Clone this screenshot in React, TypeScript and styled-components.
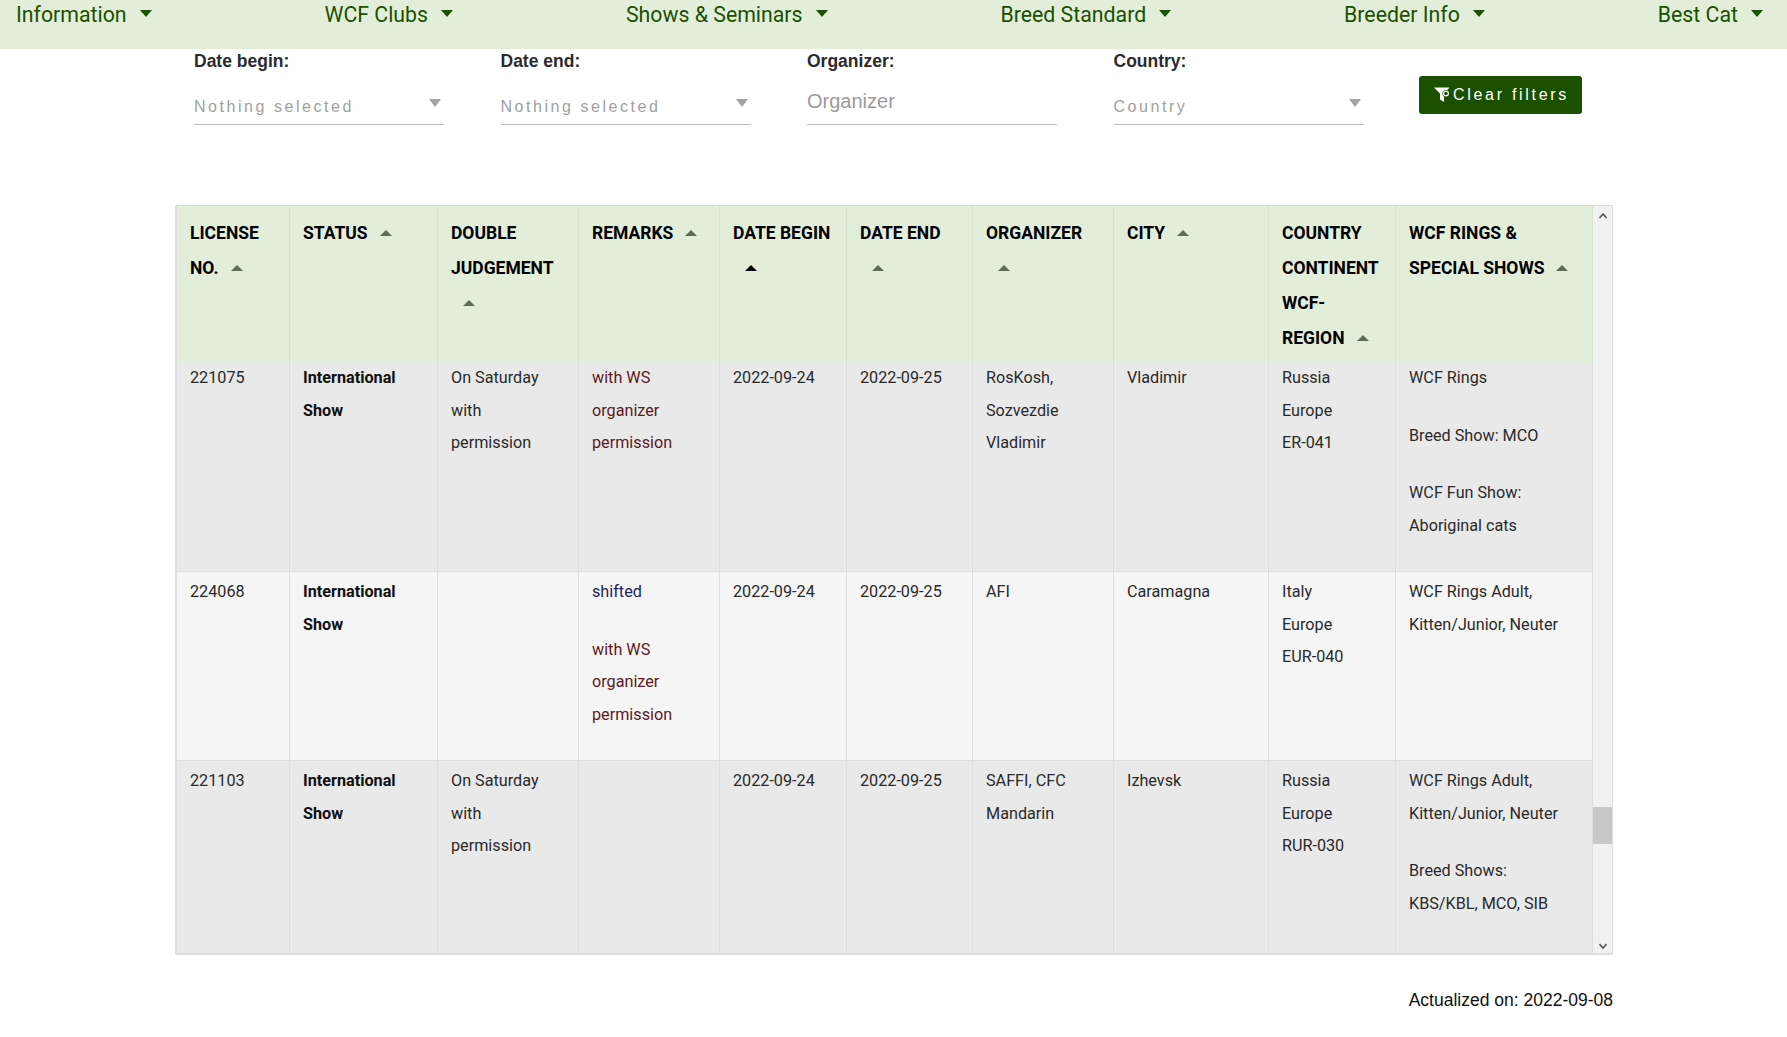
import React from 'react'
import styled, { createGlobalStyle } from 'styled-components'

const GlobalStyle = createGlobalStyle`
  html, body {
    margin: 0;
    padding: 0;
    background: #fff;
    overflow: hidden;
  }
  * { box-sizing: border-box; }
`

const COLUMNS = '113px 148px 141px 141px 127px 126px 141px 155px 127px 197px'

const navItems = ['Information', 'WCF Clubs', 'Shows & Seminars', 'Breed Standard', 'Breeder Info', 'Best Cat']

const headers = [
  { lines: ['LICENSE', 'NO.'] },
  { lines: ['STATUS'] },
  { lines: ['DOUBLE', 'JUDGEMENT', ''] },
  { lines: ['REMARKS'] },
  { lines: ['DATE BEGIN', ''], active: true },
  { lines: ['DATE END', ''] },
  { lines: ['ORGANIZER', ''] },
  { lines: ['CITY'] },
  { lines: ['COUNTRY', 'CONTINENT', 'WCF-', 'REGION'] },
  { lines: ['WCF RINGS &', 'SPECIAL SHOWS'] },
]

type Row = {
  height: number
  even?: boolean
  first?: boolean
  license: string
  judgement: string[]
  remarks: { text: string; tone: 'red' | 'blue' }[][]
  organizer: string[]
  city: string
  region: string[]
  rings: string[][]
}

const withWs = [
  { text: 'with WS', tone: 'red' as const },
  { text: 'organizer', tone: 'red' as const },
  { text: 'permission', tone: 'red' as const },
]

const rows: Row[] = [
  {
    height: 214,
    first: true,
    license: '221075',
    judgement: ['On Saturday', 'with', 'permission'],
    remarks: [withWs],
    organizer: ['RosKosh,', 'Sozvezdie', 'Vladimir'],
    city: 'Vladimir',
    region: ['Russia', 'Europe', 'ER-041'],
    rings: [['WCF Rings'], ['Breed Show: MCO'], ['WCF Fun Show:', 'Aboriginal cats']],
  },
  {
    height: 189,
    even: true,
    license: '224068',
    judgement: [],
    remarks: [[{ text: 'shifted', tone: 'blue' }], withWs],
    organizer: ['AFI'],
    city: 'Caramagna',
    region: ['Italy', 'Europe', 'EUR-040'],
    rings: [['WCF Rings Adult,', 'Kitten/Junior, Neuter']],
  },
  {
    height: 195,
    license: '221103',
    judgement: ['On Saturday', 'with', 'permission'],
    remarks: [],
    organizer: ['SAFFI, CFC', 'Mandarin'],
    city: 'Izhevsk',
    region: ['Russia', 'Europe', 'RUR-030'],
    rings: [['WCF Rings Adult,', 'Kitten/Junior, Neuter'], ['Breed Shows:', 'KBS/KBL, MCO, SIB']],
  },
]

const App = () => {
  return (
    <>
      <GlobalStyle />
      <NavBar>
        {navItems.map((item) => (
          <NavItem key={item}>
            {item}
            <NavCaret />
          </NavItem>
        ))}
      </NavBar>

      <Filters>
        <Field>
          <FieldLabel>Date begin:</FieldLabel>
          <SelectBox>
            Nothing selected
            <SelectCaret />
          </SelectBox>
        </Field>
        <Field>
          <FieldLabel>Date end:</FieldLabel>
          <SelectBox>
            Nothing selected
            <SelectCaret />
          </SelectBox>
        </Field>
        <Field>
          <FieldLabel>Organizer:</FieldLabel>
          <TextInput placeholder="Organizer" />
        </Field>
        <Field>
          <FieldLabel>Country:</FieldLabel>
          <SelectBox>
            Country
            <SelectCaret />
          </SelectBox>
        </Field>
        <ClearButton>
          <svg width="17" height="16" viewBox="0 0 17 16">
            <path d="M0 0.5h15.5L10 6.5v8.5L6 12.5V6.5z" fill="#fff" />
            <circle cx="12" cy="6.5" r="3.6" fill="#1b5000" />
            <circle cx="12" cy="6.5" r="2.4" fill="none" stroke="#fff" strokeWidth="1.2" />
          </svg>
          Clear filters
        </ClearButton>
      </Filters>

      <TableFrame>
        <TableArea>
          <HeaderRow>
            {headers.map((h, i) => (
              <HeaderCell key={i}>
                {h.lines.map((line, j) => (
                  <HeaderLine key={j}>
                    {line}
                    {j === h.lines.length - 1 && <SortCaret $active={h.active} />}
                  </HeaderLine>
                ))}
              </HeaderCell>
            ))}
          </HeaderRow>
          <BodyClip>
            {rows.map((row) => (
              <BodyRow key={row.license} $even={row.even} $first={row.first} $height={row.height}>
                <Cell>{row.license}</Cell>
                <Cell>
                  <StatusText>International</StatusText>
                  <StatusText>Show</StatusText>
                </Cell>
                <Cell>
                  {row.judgement.map((l) => (
                    <div key={l}>{l}</div>
                  ))}
                </Cell>
                <Cell>
                  {row.remarks.map((group, i) => (
                    <Block key={i}>
                      {group.map((l) => (
                        <RemarkLine key={l.text} $tone={l.tone}>
                          {l.text}
                        </RemarkLine>
                      ))}
                    </Block>
                  ))}
                </Cell>
                <Cell>2022-09-24</Cell>
                <Cell>2022-09-25</Cell>
                <Cell>
                  {row.organizer.map((l) => (
                    <div key={l}>{l}</div>
                  ))}
                </Cell>
                <Cell>{row.city}</Cell>
                <Cell>
                  {row.region.map((l) => (
                    <div key={l}>{l}</div>
                  ))}
                </Cell>
                <Cell>
                  {row.rings.map((group, i) => (
                    <Block key={i}>
                      {group.map((l) => (
                        <div key={l}>{l}</div>
                      ))}
                    </Block>
                  ))}
                </Cell>
              </BodyRow>
            ))}
          </BodyClip>
        </TableArea>
        <ScrollBar>
          <ScrollArrow viewBox="0 0 8 6">
            <path d="M0.5 5L4 1l3.5 4" fill="none" stroke="#555" strokeWidth="1.6" />
          </ScrollArrow>
          <ScrollThumb />
          <ScrollArrow viewBox="0 0 8 6">
            <path d="M0.5 1L4 5l3.5-4" fill="none" stroke="#555" strokeWidth="1.6" />
          </ScrollArrow>
        </ScrollBar>
      </TableFrame>

      <Actualized>Actualized on: 2022-09-08</Actualized>
    </>
  )
}

const NavBar = styled.nav`
  height: 49px;
  padding: 0 24px 20px 16px;
  display: flex;
  justify-content: space-between;
  align-items: center;
  background-color: #e3eeda;
`
const NavItem = styled.div`
  display: flex;
  align-items: center;
  font-family: Roboto, sans-serif;
  font-size: 21.3px;
  color: #1b5000;
  white-space: nowrap;
`
const NavCaret = styled.span`
  width: 0;
  height: 0;
  margin-left: 13px;
  margin-bottom: 3px;
  border-left: 6.5px solid transparent;
  border-right: 6.5px solid transparent;
  border-top: 7px solid #1b5000;
`
const Filters = styled.section`
  height: 156px;
  padding-left: 194px;
  display: flex;
  align-items: flex-start;
  gap: 56.5px;
`
const Field = styled.div`
  width: 250px;
`
const FieldLabel = styled.div`
  height: 36px;
  line-height: 24px;
  font-family: "Liberation Sans", Arial, sans-serif;
  font-size: 17.5px;
  font-weight: 700;
  color: #2b2b2b;
`
const SelectBox = styled.div`
  height: 40px;
  padding-top: 12px;
  display: flex;
  justify-content: space-between;
  font-family: "Liberation Sans", Arial, sans-serif;
  font-size: 16px;
  line-height: 19px;
  letter-spacing: 2.55px;
  color: #a0a0a0;
  border-bottom: 1px solid #bdbdbd;

  span {
    margin: 2px 3px 0 0;
  }
`
const SelectCaret = styled.span`
  width: 0;
  height: 0;
  border-left: 6.5px solid transparent;
  border-right: 6.5px solid transparent;
  border-top: 8px solid #a3a3a3;
`
const TextInput = styled.input`
  display: block;
  width: 100%;
  height: 40px;
  padding: 0 0 6px;
  border: 0;
  border-bottom: 1px solid #bdbdbd;
  outline: none;
  background: transparent;
  font-family: "Liberation Sans", Arial, sans-serif;
  font-size: 20px;
  &::placeholder {
    color: #9b9b9b;
    opacity: 1;
  }
`
const ClearButton = styled.button`
  width: 163px;
  height: 38px;
  margin: 27px 0 0 -1px;
  padding: 0 0 0 15px;
  display: flex;
  align-items: center;
  border: 0;
  border-radius: 3px;
  background-color: #1b5000;
  color: #fff;
  font-family: "Liberation Sans", Arial, sans-serif;
  font-size: 16px;
  letter-spacing: 2.7px;
  white-space: nowrap;

  svg {
    flex: none;
    margin-right: 2px;
  }
`
const TableFrame = styled.div`
  width: 1438px;
  height: 750px;
  margin-left: 175px;
  display: flex;
  border: 1px solid #dddddd;
  border-left-width: 2px;
  border-bottom-width: 2px;
`
const TableArea = styled.div`
  width: 1416px;
  display: flex;
  flex-direction: column;
`
const HeaderRow = styled.div`
  display: grid;
  grid-template-columns: ${COLUMNS};
  height: 157px;
  background-color: #e3eeda;
`
const HeaderCell = styled.div`
  padding: 10px 13px 0 13px;
  border-right: 1px solid #d8e2d0;
  font-family: Roboto, sans-serif;
  font-size: 17.5px;
  font-weight: 700;
  line-height: 35px;
  color: #000;
  white-space: nowrap;
`
const HeaderLine = styled.div`
  height: 35px;
`
const SortCaret = styled.span<{ $active?: boolean }>`
  display: inline-block;
  vertical-align: 3px;
  margin-left: 12px;
  width: 0;
  height: 0;
  border-left: 6.5px solid transparent;
  border-right: 6.5px solid transparent;
  border-bottom: 6.5px solid ${(p) => (p.$active ? '#000' : '#5d6c58')};
`
const BodyClip = styled.div`
  flex: 1;
  overflow: hidden;
`
const BodyRow = styled.div<{ $even?: boolean; $first?: boolean; $height: number }>`
  display: grid;
  grid-template-columns: ${COLUMNS};
  height: ${(p) => p.$height}px;
  margin-top: ${(p) => (p.$first ? '-5px' : '0')};
  background-color: ${(p) => (p.$even ? '#f5f5f5' : '#e9e9e9')};
  border-bottom: 1px solid #dddddd;
`
const Cell = styled.div`
  padding: 4px 13px 0 13px;
  border-right: 1px solid #dddddd;
  font-family: Roboto, sans-serif;
  font-size: 16.2px;
  line-height: 32.5px;
  color: #2a2a2a;
  white-space: nowrap;
`
const StatusText = styled.div`
  font-weight: 700;
  color: #111;
`
const Block = styled.div`
  & + & {
    margin-top: 25px;
  }
`
const RemarkLine = styled.div<{ $tone: 'red' | 'blue' }>`
  color: ${(p) => (p.$tone === 'red' ? '#5e1a24' : '#25235e')};
`
const ScrollBar = styled.div`
  flex: 1;
  display: flex;
  flex-direction: column;
  align-items: center;
  padding: 7px 0 4px;
  background-color: #f1f1f1;
`
const ScrollArrow = styled.svg`
  width: 8px;
  height: 6px;
  flex: none;
`
const ScrollThumb = styled.div`
  width: 100%;
  height: 37px;
  margin: 588px 0 auto;
  background-color: #c8c8c8;
`
const Actualized = styled.div`
  width: 1613px;
  margin-top: 34px;
  text-align: right;
  font-family: "Liberation Sans", Arial, sans-serif;
  font-size: 17.5px;
  line-height: 22px;
  color: #111;
`

export default App
